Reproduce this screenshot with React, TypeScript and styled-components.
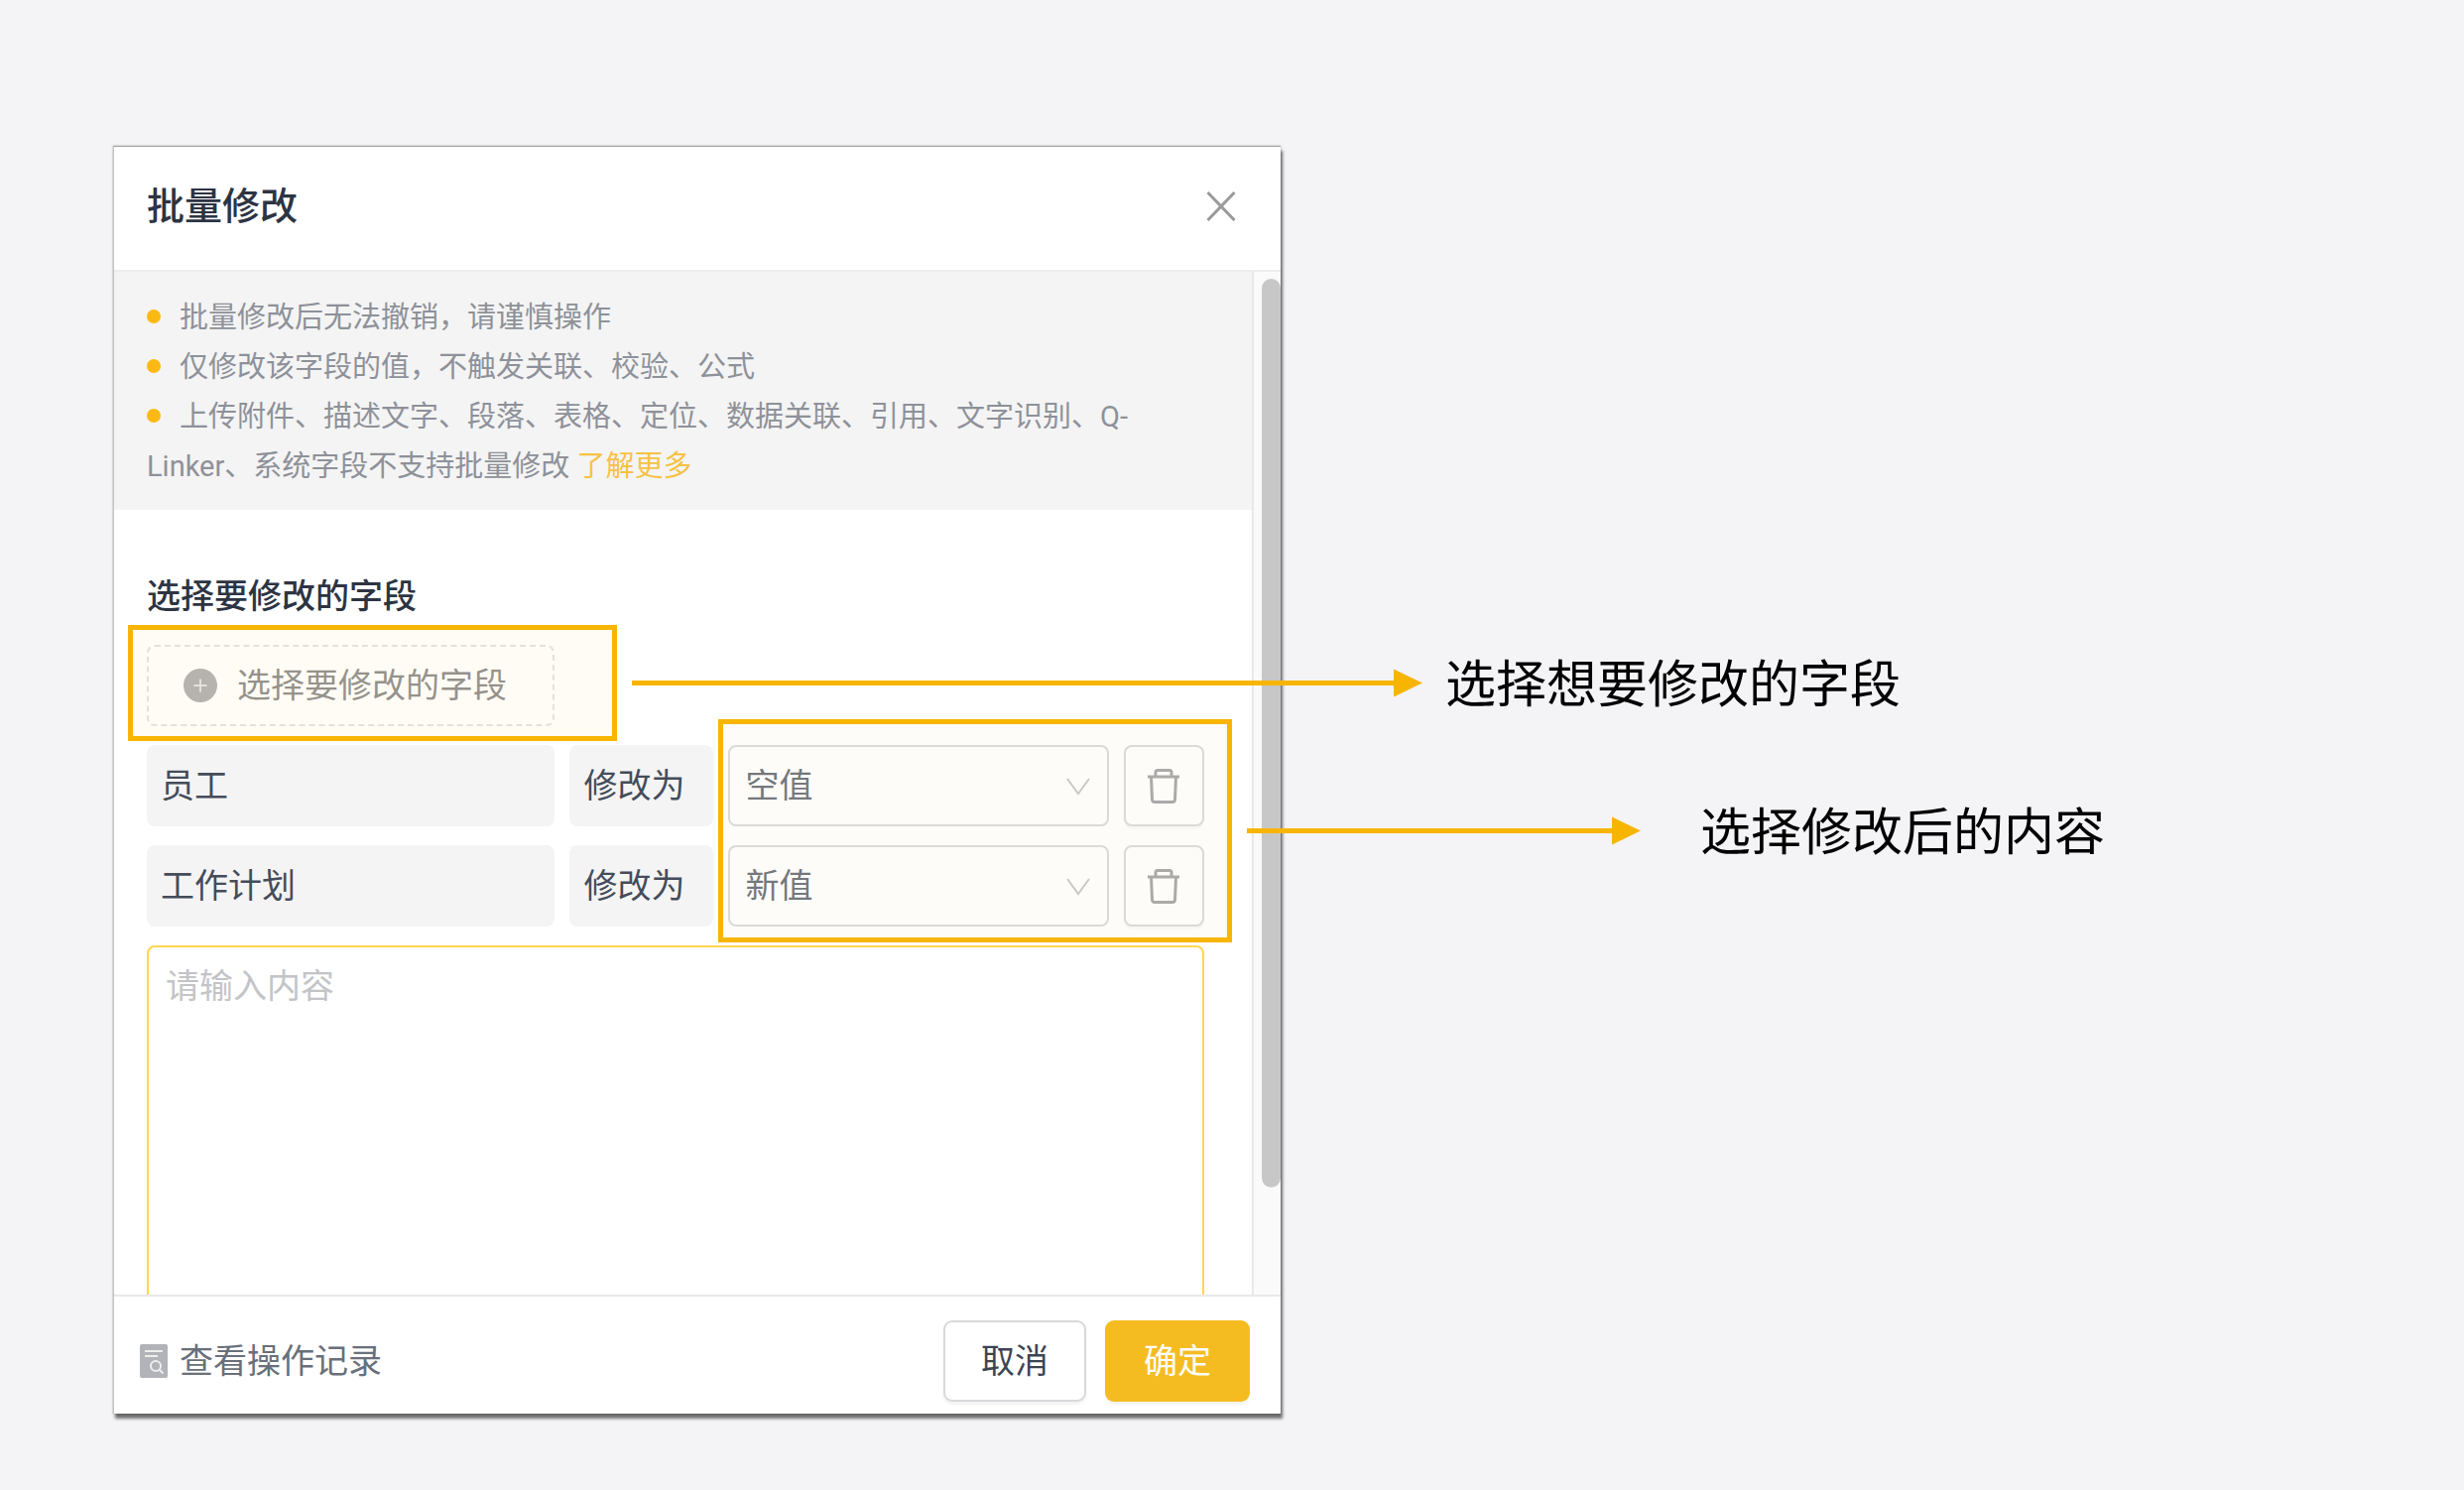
import React from "react";
import styled, { createGlobalStyle } from "styled-components";

const amber = "#f8b500";

const GlobalStyle = createGlobalStyle`
  *, *::before, *::after { box-sizing: border-box; }
  body {
    margin: 0;
    background: #f4f4f7;
    font-family: Roboto, "Noto Sans CJK SC", sans-serif;
  }
  button, select, textarea { font: inherit; }
`;

const Page = styled.main`
  min-height: 100vh;
  padding: 147px 114px 77px;
  overflow: hidden;
`;

const Stage = styled.div`
  position: relative;
  width: 1177px;
  max-width: 100%;
`;

const Dialog = styled.section`
  display: flex;
  flex-direction: column;
  height: calc(100vh - 224px);
  background: #fff;
  border-top: 1px solid #a0a0a0;
  border-left: 1px solid #c4c4c4;
  box-shadow: 2px 5px 3px rgba(0, 0, 0, 0.55), 0 0 2px rgba(0, 0, 0, 0.3);
`;

const Header = styled.header`
  display: flex;
  flex: none;
  align-items: center;
  justify-content: space-between;
  height: 126px;
  padding: 0 45px 4px 33px;
  border-bottom: 2px solid #eeeeee;
`;

const Title = styled.h1`
  margin: 0;
  font-size: 38px;
  line-height: 50px;
  font-weight: 500;
  color: #2d3442;
`;

const IconButton = styled.button`
  display: flex;
  padding: 0;
  border: 0;
  background: none;
  color: #9a9a9a;
  cursor: pointer;
`;

const Body = styled.div`
  display: flex;
  flex: 1;
  min-height: 0;
`;

const Content = styled.div`
  flex: 1;
  min-width: 0;
  overflow: hidden;
`;

const ScrollTrack = styled.div`
  flex: none;
  width: 29px;
  padding: 7px 0 0 8px;
  border-left: 2px solid #e9e9e9;
  background: #fafafa;
`;

const ScrollThumb = styled.div`
  height: calc(100% - 108px);
  border-radius: 10px;
  background: #c7c7c7;
`;

const Notice = styled.ul`
  margin: 0;
  padding: 21px 48px 19px 33px;
  list-style: none;
  background: #f4f4f4;
  color: #8e9199;
  font-size: 29px;
  line-height: 50px;
`;

const NoticeItem = styled.li`
  &::before {
    content: "";
    display: inline-block;
    width: 14px;
    height: 14px;
    margin-right: 19px;
    border-radius: 50%;
    background: #fdb913;
    vertical-align: 4px;
  }
`;

const MoreLink = styled.a`
  color: #f7c244;
  text-decoration: none;
`;

const Form = styled.form`
  display: flex;
  flex-direction: column;
  gap: 19px;
  padding: 62px 48px 0 33px;
  font-size: 34px;
  line-height: 50px;
`;

const SectionTitle = styled.h2`
  margin: 0 0 5px;
  font-size: 34px;
  line-height: 50px;
  font-weight: 500;
  color: #2d3442;
`;

const Row = styled.div`
  display: grid;
  grid-template-columns: 411fr 144fr 384fr 81fr;
  gap: 15px;
`;

const FieldPicker = styled.button`
  display: flex;
  align-items: center;
  gap: 20px;
  height: 82px;
  padding: 0 35px;
  border: 2px dashed #c9c9c9;
  border-radius: 8px;
  background: #fff;
  color: #2a2a2a;
  white-space: nowrap;
  cursor: pointer;
`;

const Cell = styled.div`
  display: flex;
  align-items: center;
  height: 82px;
  padding: 0 14px;
  border-radius: 8px;
  background: #f4f4f4;
  color: #454c5a;
  white-space: nowrap;
`;

const SelectBox = styled.div`
  display: grid;
  align-items: center;

  & > * {
    grid-area: 1 / 1;
  }

  svg {
    justify-self: end;
    margin-right: 18px;
    pointer-events: none;
  }
`;

const Select = styled.select`
  appearance: none;
  width: 100%;
  height: 82px;
  padding: 0 16px;
  border: 2px solid #c6c6c6;
  border-radius: 8px;
  background: #fff;
  color: #1c2430;
`;

const DeleteButton = styled.button`
  display: flex;
  align-items: center;
  justify-content: center;
  height: 82px;
  padding: 0;
  border: 2px solid #c6c6c6;
  border-radius: 8px;
  background: #fff;
  color: #77777a;
  box-shadow: 0 3px 2px rgba(0, 0, 0, 0.04);
  cursor: pointer;
`;

const ValueInput = styled.textarea`
  display: block;
  width: 100%;
  height: 420px;
  padding: 14px 17px;
  border: 2px solid #ffd650;
  border-radius: 8px;
  outline: 0;
  resize: none;
  color: #2d3442;

  &::placeholder {
    color: #c3c4c8;
    opacity: 1;
  }
`;

const Footer = styled.footer`
  display: flex;
  flex: none;
  align-items: center;
  gap: 19px;
  height: 120px;
  padding: 12px 31px 0 26px;
  border-top: 2px solid #e9e9e9;
  font-size: 34px;
  line-height: 50px;
`;

const HistoryLink = styled.a`
  display: flex;
  align-items: center;
  gap: 12px;
  margin-right: auto;
  color: #69707a;
  text-decoration: none;
`;

const Button = styled.button<{ $primary?: boolean }>`
  height: 82px;
  padding: 0 ${(p) => (p.$primary ? 39 : 36)}px;
  border: ${(p) => (p.$primary ? "0" : "2px solid #d8d9dd")};
  border-radius: 9px;
  background: ${(p) => (p.$primary ? "#f5bc22" : "#fff")};
  color: ${(p) => (p.$primary ? "#fff" : "#3c4452")};
  box-shadow: 0 3px 3px rgba(0, 0, 0, 0.05);
  white-space: nowrap;
  cursor: pointer;
`;

const Highlight = styled.div<{ $x: number; $y: number; $w: number; $h: number; $tint: string }>`
  position: absolute;
  left: ${(p) => p.$x}px;
  top: ${(p) => p.$y}px;
  width: ${(p) => p.$w}px;
  height: ${(p) => p.$h}px;
  border: 5px solid ${amber};
  background: ${(p) => p.$tint};
  pointer-events: none;
`;

const Callout = styled.div<{ $x: number; $y: number; $gap: number }>`
  position: absolute;
  left: ${(p) => p.$x}px;
  top: ${(p) => p.$y}px;
  display: flex;
  align-items: center;
  gap: ${(p) => p.$gap}px;
  white-space: nowrap;
  pointer-events: none;

  svg {
    flex: none;
  }
`;

const CalloutLabel = styled.span`
  padding-top: 4px;
  color: #000;
  font-size: 51px;
  line-height: 56px;
`;

function Arrow({ length }: { length: number }) {
  return (
    <svg width={length} height="30" viewBox={`0 0 ${length} 30`} fill={amber} aria-hidden="true">
      <rect x="0" y="12" width={length - 28} height="5" />
      <path d={`M${length - 29} 0.5 L${length} 14.5 L${length - 29} 28.5 Z`} />
    </svg>
  );
}

function CloseIcon() {
  return (
    <svg width="30" height="30" viewBox="0 0 30 30" fill="none" stroke="currentColor" strokeWidth="3">
      <path d="M1.5 1 L28.5 29 M28.5 1 L1.5 29" />
    </svg>
  );
}

function PlusIcon() {
  return (
    <svg width="34" height="34" viewBox="0 0 34 34" aria-hidden="true">
      <circle cx="17" cy="17" r="17" fill="#6c6c70" />
      <path d="M17 10.5 V23.5 M10.5 17 H23.5" stroke="#c8c8c8" strokeWidth="2" />
    </svg>
  );
}

function ChevronIcon() {
  return (
    <svg width="26" height="20" viewBox="0 0 26 20" fill="none" stroke="#a9a9ab" strokeWidth="2">
      <path d="M2 3 L13 18 L24 3" />
    </svg>
  );
}

function TrashIcon() {
  return (
    <svg width="34" height="36" viewBox="0 0 34 36" fill="none" stroke="currentColor" strokeWidth="3" aria-hidden="true">
      <path d="M1 9 H33" />
      <path d="M9 8 V4.500 Q9 2.500 11 2.500 H23 Q25 2.500 25 4.500 V8" />
      <path d="M4.500 9 L5.500 32 Q5.700 34.500 8 34.500 H26 Q28.300 34.500 28.500 32 L29.500 9" />
    </svg>
  );
}

function RecordIcon() {
  return (
    <svg width="28" height="34" viewBox="0 0 28 34" fill="none" stroke="#eeeeef" strokeWidth="2" aria-hidden="true">
      <rect width="28" height="34" rx="2" fill="#b1b3b9" stroke="none" />
      <path d="M5 7 H23 M5 12 H18" />
      <circle cx="16" cy="22" r="5" />
      <path d="M19.500 25.500 L23.500 29.500" />
    </svg>
  );
}

const rows = [
  { field: "员工", value: "空值" },
  { field: "工作计划", value: "新值" },
];

export default function App() {
  return (
    <Page>
      <GlobalStyle />
      <Stage>
        <Dialog role="dialog" aria-labelledby="dialog-title">
          <Header>
            <Title id="dialog-title">批量修改</Title>
            <IconButton type="button" aria-label="关闭">
              <CloseIcon />
            </IconButton>
          </Header>
          <Body>
            <Content>
              <Notice>
                <NoticeItem>批量修改后无法撤销，请谨慎操作</NoticeItem>
                <NoticeItem>仅修改该字段的值，不触发关联、校验、公式</NoticeItem>
                <NoticeItem>
                  上传附件、描述文字、段落、表格、定位、数据关联、引用、文字识别、Q-Linker、系统字段不支持批量修改{" "}
                  <MoreLink href="#more">了解更多</MoreLink>
                </NoticeItem>
              </Notice>
              <Form>
                <SectionTitle>选择要修改的字段</SectionTitle>
                <Row>
                  <FieldPicker type="button">
                    <PlusIcon />
                    选择要修改的字段
                  </FieldPicker>
                </Row>
                {rows.map((row) => (
                  <Row key={row.field}>
                    <Cell>{row.field}</Cell>
                    <Cell>修改为</Cell>
                    <SelectBox>
                      <Select aria-label={row.field} defaultValue={row.value}>
                        <option>空值</option>
                        <option>新值</option>
                      </Select>
                      <ChevronIcon />
                    </SelectBox>
                    <DeleteButton type="button" aria-label="删除">
                      <TrashIcon />
                    </DeleteButton>
                  </Row>
                ))}
                <ValueInput aria-label="工作计划" placeholder="请输入内容" />
              </Form>
            </Content>
            <ScrollTrack>
              <ScrollThumb />
            </ScrollTrack>
          </Body>
          <Footer>
            <HistoryLink href="#history">
              <RecordIcon />
              查看操作记录
            </HistoryLink>
            <Button type="button">取消</Button>
            <Button type="button" $primary>
              确定
            </Button>
          </Footer>
        </Dialog>

        <Highlight $x={15} $y={483} $w={493} $h={117} $tint="rgba(255, 250, 235, 0.5)" />
        <Callout $x={523} $y={512} $gap={23}>
          <Arrow length={797} />
          <CalloutLabel>选择想要修改的字段</CalloutLabel>
        </Callout>
        <Highlight $x={610} $y={578} $w={518} $h={225} $tint="rgba(251, 248, 240, 0.4)" />
        <Callout $x={1143} $y={661} $gap={60}>
          <Arrow length={397} />
          <CalloutLabel>选择修改后的内容</CalloutLabel>
        </Callout>
      </Stage>
    </Page>
  );
}
